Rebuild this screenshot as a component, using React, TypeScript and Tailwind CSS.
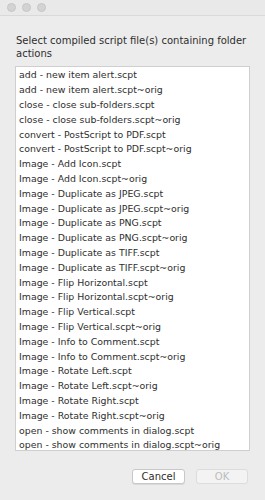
import React from 'react';

const files = [
  'add - new item alert.scpt',
  'add - new item alert.scpt~orig',
  'close - close sub-folders.scpt',
  'close - close sub-folders.scpt~orig',
  'convert - PostScript to PDF.scpt',
  'convert - PostScript to PDF.scpt~orig',
  'Image - Add Icon.scpt',
  'Image - Add Icon.scpt~orig',
  'Image - Duplicate as JPEG.scpt',
  'Image - Duplicate as JPEG.scpt~orig',
  'Image - Duplicate as PNG.scpt',
  'Image - Duplicate as PNG.scpt~orig',
  'Image - Duplicate as TIFF.scpt',
  'Image - Duplicate as TIFF.scpt~orig',
  'Image - Flip Horizontal.scpt',
  'Image - Flip Horizontal.scpt~orig',
  'Image - Flip Vertical.scpt',
  'Image - Flip Vertical.scpt~orig',
  'Image - Info to Comment.scpt',
  'Image - Info to Comment.scpt~orig',
  'Image - Rotate Left.scpt',
  'Image - Rotate Left.scpt~orig',
  'Image - Rotate Right.scpt',
  'Image - Rotate Right.scpt~orig',
  'open - show comments in dialog.scpt',
  'open - show comments in dialog.scpt~orig',
];

export default function App() {
  return (
    <div
      className="w-[265px] h-[500px] flex flex-col bg-[#ececec] text-[#2e2e2e] overflow-hidden"
      style={{ fontFamily: '"DejaVu Sans", Verdana, sans-serif' }}
    >
      {/* Title bar */}
      <div className="h-[16px] shrink-0 flex items-center gap-[6px] pl-[7px] bg-[#e9e9e9] border-b border-[#d9d9d9]">
        <span className="w-[9px] h-[9px] rounded-full bg-[#d3d3d3] border border-[#c6c6c6]" />
        <span className="w-[9px] h-[9px] rounded-full bg-[#d3d3d3] border border-[#c6c6c6]" />
        <span className="w-[9px] h-[9px] rounded-full bg-[#d3d3d3] border border-[#c6c6c6]" />
      </div>

      <div className="flex flex-col shrink-0 px-[15px] pt-[18px]">
        <p className="text-[10px] leading-[13px] pl-[1px] pr-[1px]">
          Select compiled script file(s) containing folder actions
        </p>

        {/* List */}
        <div className="mt-[6px] h-[385px] shrink-0 bg-white border border-[#cfcfcf] overflow-hidden pt-[1px]">
          {files.map((f, i) => (
            <div key={i} className="h-[14.8px] flex items-center pl-[3px] text-[9.4px] leading-[14px] whitespace-nowrap">
              {f}
            </div>
          ))}
        </div>

        {/* Buttons */}
        <div className="flex justify-end gap-[11px] mt-[18px] pr-[2px]">
          <button className="w-[53px] h-[15px] text-[10px] leading-[13px] bg-white border border-[#c8c8c8] rounded-[3px] shadow-[0_1px_0_rgba(0,0,0,0.08)]">
            Cancel
          </button>
          <button className="w-[52px] h-[15px] text-[10px] leading-[13px] text-[#bdbdbd] bg-[#f3f3f3] border border-[#dcdcdc] rounded-[3px]">
            OK
          </button>
        </div>
      </div>
    </div>
  );
}
